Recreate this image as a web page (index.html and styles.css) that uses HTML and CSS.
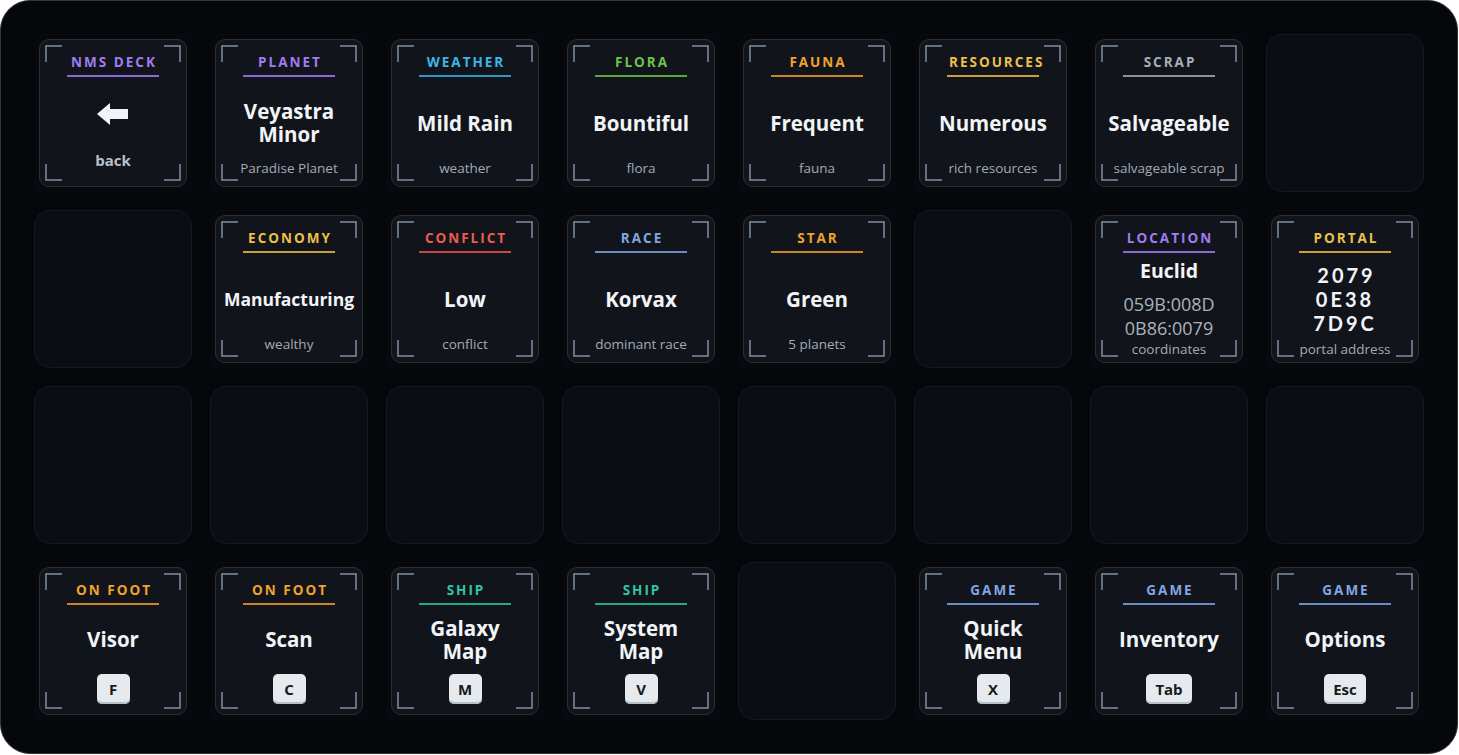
FILE: index.html
```html
<!DOCTYPE html>
<html>
<head>
    <title>NMS Deck</title>
    <meta name="viewport" content="width=device-width, initial-scale=1">
    <link rel="stylesheet" href="styles.css">
</head>

<body>
    <div class="deck">
        <!-- row 1 -->
        <div class="slot filled">
            <div class="key purple">
                <span class="corner tl"></span><span class="corner tr"></span><span class="corner bl"></span><span class="corner br"></span>
                <div class="cat">NMS DECK</div>
                <div class="main">
                    <svg class="back-arrow" width="32" height="22" viewBox="0 0 32 22">
                        <polygon points="0,11 13,0 13,6 31,6 31,16 13,16 13,22" fill="#f2f4f7"/>
                    </svg>
                </div>
                <div class="sub back-label">back</div>
            </div>
        </div>
        <div class="slot filled">
            <div class="key purple">
                <span class="corner tl"></span><span class="corner tr"></span><span class="corner bl"></span><span class="corner br"></span>
                <div class="cat">PLANET</div>
                <div class="main">Veyastra<br>Minor</div>
                <div class="sub">Paradise Planet</div>
            </div>
        </div>
        <div class="slot filled">
            <div class="key cyan">
                <span class="corner tl"></span><span class="corner tr"></span><span class="corner bl"></span><span class="corner br"></span>
                <div class="cat">WEATHER</div>
                <div class="main">Mild Rain</div>
                <div class="sub">weather</div>
            </div>
        </div>
        <div class="slot filled">
            <div class="key green">
                <span class="corner tl"></span><span class="corner tr"></span><span class="corner bl"></span><span class="corner br"></span>
                <div class="cat">FLORA</div>
                <div class="main">Bountiful</div>
                <div class="sub">flora</div>
            </div>
        </div>
        <div class="slot filled">
            <div class="key orange">
                <span class="corner tl"></span><span class="corner tr"></span><span class="corner bl"></span><span class="corner br"></span>
                <div class="cat">FAUNA</div>
                <div class="main">Frequent</div>
                <div class="sub">fauna</div>
            </div>
        </div>
        <div class="slot filled">
            <div class="key gold">
                <span class="corner tl"></span><span class="corner tr"></span><span class="corner bl"></span><span class="corner br"></span>
                <div class="cat">RESOURCES</div>
                <div class="main">Numerous</div>
                <div class="sub">rich resources</div>
            </div>
        </div>
        <div class="slot filled">
            <div class="key grey">
                <span class="corner tl"></span><span class="corner tr"></span><span class="corner bl"></span><span class="corner br"></span>
                <div class="cat">SCRAP</div>
                <div class="main">Salvageable</div>
                <div class="sub">salvageable scrap</div>
            </div>
        </div>
        <div class="slot empty"></div>

        <!-- row 2 -->
        <div class="slot empty"></div>
        <div class="slot filled">
            <div class="key gold">
                <span class="corner tl"></span><span class="corner tr"></span><span class="corner bl"></span><span class="corner br"></span>
                <div class="cat">ECONOMY</div>
                <div class="main fit">Manufacturing</div>
                <div class="sub">wealthy</div>
            </div>
        </div>
        <div class="slot filled">
            <div class="key red">
                <span class="corner tl"></span><span class="corner tr"></span><span class="corner bl"></span><span class="corner br"></span>
                <div class="cat">CONFLICT</div>
                <div class="main">Low</div>
                <div class="sub">conflict</div>
            </div>
        </div>
        <div class="slot filled">
            <div class="key blue">
                <span class="corner tl"></span><span class="corner tr"></span><span class="corner bl"></span><span class="corner br"></span>
                <div class="cat">RACE</div>
                <div class="main">Korvax</div>
                <div class="sub">dominant race</div>
            </div>
        </div>
        <div class="slot filled">
            <div class="key orange">
                <span class="corner tl"></span><span class="corner tr"></span><span class="corner bl"></span><span class="corner br"></span>
                <div class="cat">STAR</div>
                <div class="main">Green</div>
                <div class="sub">5 planets</div>
            </div>
        </div>
        <div class="slot empty"></div>
        <div class="slot filled">
            <div class="key purple tall">
                <span class="corner tl"></span><span class="corner tr"></span><span class="corner bl"></span><span class="corner br"></span>
                <div class="cat">LOCATION</div>
                <div class="main">
                    <div class="loc-name">Euclid</div>
                    <div class="coords">059B:008D<br>0B86:0079</div>
                </div>
                <div class="sub">coordinates</div>
            </div>
        </div>
        <div class="slot filled">
            <div class="key gold tall">
                <span class="corner tl"></span><span class="corner tr"></span><span class="corner bl"></span><span class="corner br"></span>
                <div class="cat">PORTAL</div>
                <div class="main portal">2079<br>0E38<br>7D9C</div>
                <div class="sub">portal address</div>
            </div>
        </div>

        <!-- row 3 -->
        <div class="slot empty"></div>
        <div class="slot empty"></div>
        <div class="slot empty"></div>
        <div class="slot empty"></div>
        <div class="slot empty"></div>
        <div class="slot empty"></div>
        <div class="slot empty"></div>
        <div class="slot empty"></div>

        <!-- row 4 -->
        <div class="slot filled">
            <div class="key orange keyed">
                <span class="corner tl"></span><span class="corner tr"></span><span class="corner bl"></span><span class="corner br"></span>
                <div class="cat">ON FOOT</div>
                <div class="main">Visor</div>
                <div class="sub"><kbd>F</kbd></div>
            </div>
        </div>
        <div class="slot filled">
            <div class="key orange keyed">
                <span class="corner tl"></span><span class="corner tr"></span><span class="corner bl"></span><span class="corner br"></span>
                <div class="cat">ON FOOT</div>
                <div class="main">Scan</div>
                <div class="sub"><kbd>C</kbd></div>
            </div>
        </div>
        <div class="slot filled">
            <div class="key teal keyed">
                <span class="corner tl"></span><span class="corner tr"></span><span class="corner bl"></span><span class="corner br"></span>
                <div class="cat">SHIP</div>
                <div class="main">Galaxy<br>Map</div>
                <div class="sub"><kbd>M</kbd></div>
            </div>
        </div>
        <div class="slot filled">
            <div class="key teal keyed">
                <span class="corner tl"></span><span class="corner tr"></span><span class="corner bl"></span><span class="corner br"></span>
                <div class="cat">SHIP</div>
                <div class="main">System<br>Map</div>
                <div class="sub"><kbd>V</kbd></div>
            </div>
        </div>
        <div class="slot empty"></div>
        <div class="slot filled">
            <div class="key blue keyed">
                <span class="corner tl"></span><span class="corner tr"></span><span class="corner bl"></span><span class="corner br"></span>
                <div class="cat">GAME</div>
                <div class="main">Quick<br>Menu</div>
                <div class="sub"><kbd>X</kbd></div>
            </div>
        </div>
        <div class="slot filled">
            <div class="key blue keyed">
                <span class="corner tl"></span><span class="corner tr"></span><span class="corner bl"></span><span class="corner br"></span>
                <div class="cat">GAME</div>
                <div class="main">Inventory</div>
                <div class="sub"><kbd>Tab</kbd></div>
            </div>
        </div>
        <div class="slot filled">
            <div class="key blue keyed">
                <span class="corner tl"></span><span class="corner tr"></span><span class="corner bl"></span><span class="corner br"></span>
                <div class="cat">GAME</div>
                <div class="main">Options</div>
                <div class="sub"><kbd>Esc</kbd></div>
            </div>
        </div>
    </div>
</body>
</html>
```

FILE: styles.css
```css
html, body {
    margin: 0;
    padding: 0;
    background-color: #ffffff;
    font-family: 'Open Sans', 'Noto Sans', sans-serif;
}

.deck {
    box-sizing: border-box;
    width: 1458px;
    height: 754px;
    padding: 33px;
    display: grid;
    grid-template-columns: repeat(8, 158px);
    grid-template-rows: repeat(4, 158px);
    gap: 18px;
    background-color: #05070a;
    border: 1px solid #2c3540;
    border-radius: 30px;
}

.slot {
    box-sizing: border-box;
    width: 158px;
    height: 158px;
}

.slot.empty {
    background-color: #0a0d13;
    border: 1px solid #151a21;
    border-radius: 16px;
}

.slot.filled {
    padding: 5px;
    background-color: #07090d;
}

.key {
    position: relative;
    box-sizing: border-box;
    width: 148px;
    height: 148px;
    display: flex;
    flex-direction: column;
    align-items: center;
    padding: 13px 0 9px;
    background-color: #11151b;
    border: 1px solid #29313b;
    border-radius: 10px;
    color: #f2f4f7;
    text-align: center;
}

/* corner brackets */
.corner {
    position: absolute;
    width: 15px;
    height: 15px;
    border: 0 solid #66717f;
}
.corner.tl { top: 5px; left: 5px; border-top-width: 2px; border-left-width: 2px; }
.corner.tr { top: 5px; right: 5px; border-top-width: 2px; border-right-width: 2px; }
.corner.bl { bottom: 5px; left: 5px; border-bottom-width: 2px; border-left-width: 2px; }
.corner.br { bottom: 5px; right: 5px; border-bottom-width: 2px; border-right-width: 2px; }

.cat {
    width: 92px;
    height: 18px;
    line-height: 18px;
    font-size: 13.5px;
    font-weight: 700;
    letter-spacing: 2px;
    text-indent: 2px;
    padding-bottom: 4px;
    border-bottom: 2px solid currentColor;
    white-space: nowrap;
}

.purple .cat { color: #a07cf0; border-color: #8a68d6; }
.cyan .cat   { color: #3cb6e8; border-color: #2f98c8; }
.green .cat  { color: #6cc447; border-color: #5aa83a; }
.orange .cat { color: #f0a22e; border-color: #c98526; }
.gold .cat   { color: #ecc04a; border-color: #c9a03c; }
.grey .cat   { color: #a6aeb8; border-color: #8a929c; }
.red .cat    { color: #ee5b4f; border-color: #c84a40; }
.blue .cat   { color: #80a6e2; border-color: #6a8cc2; }
.teal .cat   { color: #2ec7a2; border-color: #27a888; }

.main {
    flex: 1;
    display: flex;
    flex-direction: column;
    align-items: center;
    justify-content: center;
    padding-top: 10px;
    font-size: 20.5px;
    font-weight: 700;
    line-height: 23px;
    white-space: nowrap;
}

/* long labels are shrunk to fit the key */
.main.fit {
    font-size: 17.5px;
}

.sub {
    height: 18px;
    line-height: 18px;
    font-size: 13.5px;
    color: #a3abb5;
    white-space: nowrap;
}

.back-label {
    font-size: 15px;
    font-weight: 700;
    color: #b9c0c9;
    margin-bottom: 8px;
}

.back-arrow {
    display: block;
    margin-top: -10px;
}

/* taller content: location and portal */
.tall {
    padding-bottom: 4px;
}
.tall .main {
    padding-top: 5px;
}

.loc-name {
    font-size: 19.5px;
    line-height: 24px;
    margin-bottom: 9px;
}

.coords {
    font-size: 18px;
    font-weight: 400;
    line-height: 24px;
    color: #aab2bc;
}

.portal {
    font-family: 'Lato', 'Open Sans', sans-serif;
    font-size: 20px;
    font-weight: 700;
    line-height: 24px;
    letter-spacing: 3px;
    text-indent: 3px;
}

/* keys with a keyboard shortcut */
.keyed {
    padding-bottom: 10px;
}
.keyed .main {
    padding-top: 0;
}
.keyed .sub {
    height: 30px;
}

kbd {
    display: inline-block;
    box-sizing: border-box;
    min-width: 33px;
    height: 30px;
    padding: 0 9px;
    line-height: 30px;
    background-color: #e6e9ee;
    border-radius: 5px;
    box-shadow: inset 0 -2px 0 #b9bfc8;
    color: #151a21;
    font-family: 'Open Sans', 'Noto Sans', sans-serif;
    font-size: 15px;
    font-weight: 700;
}
```
